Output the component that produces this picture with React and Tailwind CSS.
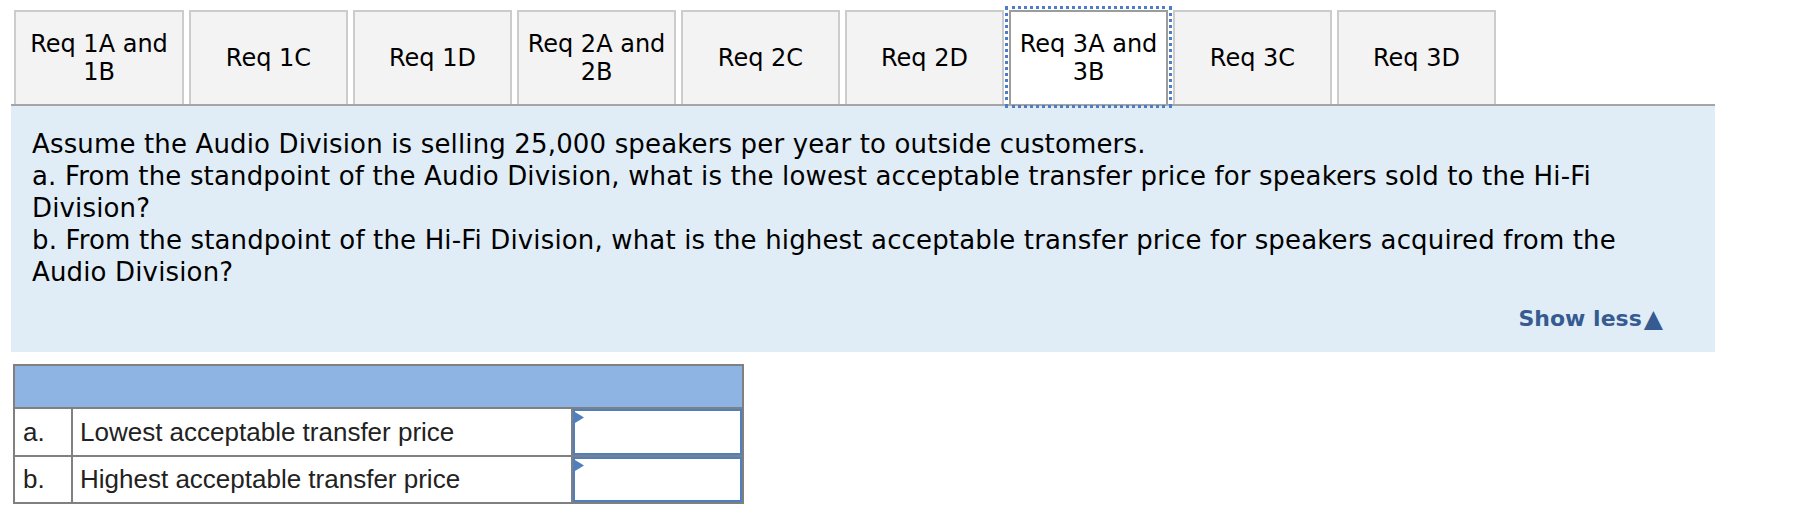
import React from "react";

const tabs = [
  { label: ["Req 1A and", "1B"], w: "w-[170px]" },
  { label: ["Req 1C"] },
  { label: ["Req 1D"] },
  { label: ["Req 2A and", "2B"] },
  { label: ["Req 2C"] },
  { label: ["Req 2D"] },
  { label: ["Req 3A and", "3B"], active: true },
  { label: ["Req 3C"] },
  { label: ["Req 3D"] },
];

function Tab({ t }) {
  const base =
    "flex flex-col items-center justify-center h-[94px] text-[24px] leading-[28px] text-black text-center shrink-0";
  const width = t.w || "w-[159px]";
  const look = t.active
    ? "bg-white border-2 border-b-0 border-[#9c9c9c] outline-[3px] outline-dotted outline-[#4d7dc6] outline-offset-[1px] relative z-10"
    : "bg-[#f3f3f3] border-2 border-b-0 border-[#cccccc]";
  return (
    <div className={`${base} ${width} ${look}`}>
      {t.label.map((l, i) => (
        <span key={i} className="whitespace-nowrap">
          {l}
        </span>
      ))}
    </div>
  );
}

function InputCell() {
  return (
    <div className="flex-1 h-full p-0">
      <div className="relative h-full border-2 border-[#4f7fbe] bg-white">
        <svg
          className="absolute left-0 top-[1px]"
          width="10"
          height="11"
          viewBox="0 0 10 11"
        >
          <polygon points="0,0 9,5.5 0,11" fill="#4f7fbe" />
        </svg>
      </div>
    </div>
  );
}

export default function App() {
  return (
    <div className="w-[1802px] h-[516px] bg-white overflow-hidden">
      <div className="font-['DejaVu_Sans',Verdana,sans-serif]">
        <div className="flex pl-[14px] pt-[10px] gap-[5px]">
          {tabs.map((t, i) => (
            <Tab key={i} t={t} />
          ))}
        </div>
        <div className="ml-[11px] w-[1704px] border-t-2 border-[#a5a5a5] bg-[#e0edf7] pl-[21px] pr-[52px] pt-[22px] pb-[17px]">
          <div className="text-[26px] leading-[32px] tracking-[0.15px] text-black">
            <div className="whitespace-nowrap">
              Assume the Audio Division is selling 25,000 speakers per year to outside customers.
            </div>
            <div className="whitespace-nowrap">
              a. From the standpoint of the Audio Division, what is the lowest acceptable transfer price for speakers sold to the Hi-Fi
            </div>
            <div className="whitespace-nowrap">Division?</div>
            <div className="whitespace-nowrap">
              b. From the standpoint of the Hi-Fi Division, what is the highest acceptable transfer price for speakers acquired from the
            </div>
            <div className="whitespace-nowrap">Audio Division?</div>
          </div>
          <div className="mt-[15px] flex justify-end text-[22px] leading-[32px] font-bold text-[#365b91]">
            <span className="whitespace-nowrap flex items-center">
              Show less<span className="ml-[2px] text-[25px] leading-[32px]">▲</span>
            </span>
          </div>
        </div>
      </div>

      <div className="ml-[13px] mt-[12px] w-[731px] border-2 border-[#808080] font-['Liberation_Sans',Arial,sans-serif] text-[26px] text-[#222]">
        <div className="h-[43px] bg-[#8eb4e3] border-b-2 border-[#808080]" />
        <div className="flex h-[48px] border-b-2 border-[#808080]">
          <div className="w-[58px] border-r-2 border-[#808080] pl-[8px] flex items-center">
            a.
          </div>
          <div className="w-[500px] border-r-2 border-[#808080] pl-[7px] flex items-center whitespace-nowrap">
            Lowest acceptable transfer price
          </div>
          <InputCell />
        </div>
        <div className="flex h-[45px]">
          <div className="w-[58px] border-r-2 border-[#808080] pl-[8px] flex items-center">
            b.
          </div>
          <div className="w-[500px] border-r-2 border-[#808080] pl-[7px] flex items-center whitespace-nowrap">
            Highest acceptable transfer price
          </div>
          <InputCell />
        </div>
      </div>
    </div>
  );
}
